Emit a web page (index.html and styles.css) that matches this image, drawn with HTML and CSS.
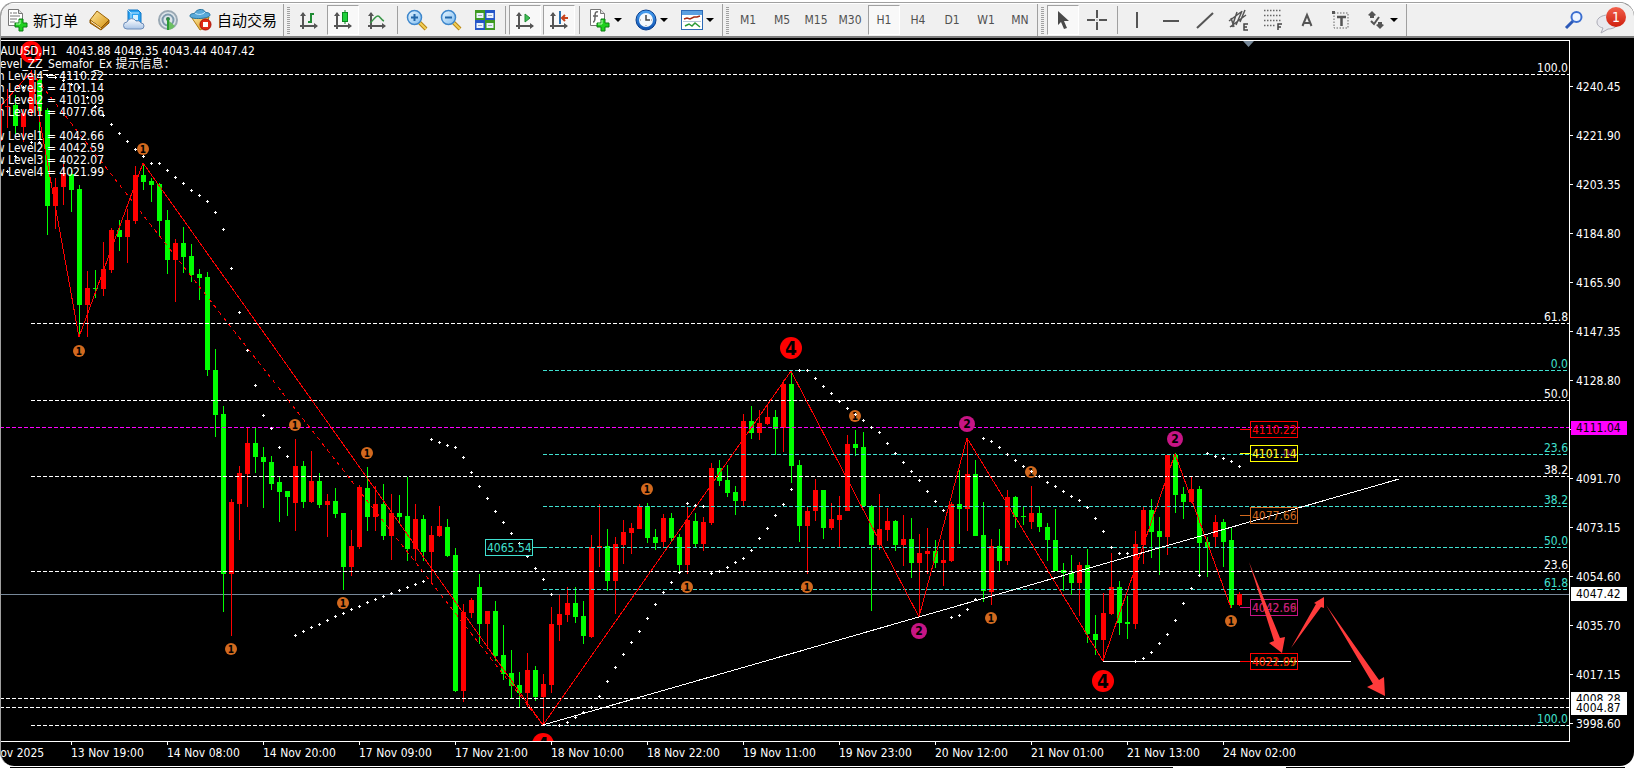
FILE: index.html
```html
<!DOCTYPE html>
<html lang="zh-CN">
<head>
<meta charset="utf-8">
<title>XAUUSD,H1</title>
<link rel="stylesheet" href="styles.css">
</head>
<body>
<svg class="defs" width="0" height="0" aria-hidden="true">
  <defs>
    <linearGradient id="gold" x1="0" y1="0" x2="1" y2="1"><stop offset="0" stop-color="#ffe9a0"/><stop offset="1" stop-color="#d6920f"/></linearGradient>
    <linearGradient id="glass" x1="0" y1="0" x2="1" y2="1"><stop offset="0" stop-color="#e8f6ff"/><stop offset="1" stop-color="#7fbcf0"/></linearGradient>
    <linearGradient id="cloud" x1="0" y1="0" x2="0" y2="1"><stop offset="0" stop-color="#ffffff"/><stop offset="1" stop-color="#a9c4e6"/></linearGradient>
    <linearGradient id="ring" x1="0" y1="0" x2="0" y2="1"><stop offset="0" stop-color="#4aa3f5"/><stop offset="1" stop-color="#0b4fae"/></linearGradient>
    <g id="plus"><path d="M12 11h4v4h4v4h-4v4h-4v-4h-4v-4h4z" transform="translate(0 1)" fill="#1fd01f" stroke="#0a7d12"/><path d="M13 13v4h-4" fill="none" stroke="#b7ffb0"/></g>
    <g id="axes"><path d="M4 3v16M1 16h17" stroke="#555" stroke-width="2" fill="none"/><path d="M1 6l3-4 3 4zM15 13l4 3-4 3z" fill="#555"/></g>
  </defs>
</svg>
<main class="window">
  <header class="toolbar">
    <div class="group">
      <button class="tool tool-text"><svg width="22" height="24" viewBox="0 0 22 24"><path d="M1.500 1.500h10l4 4v12h-14z" fill="#fff" stroke="#777"/><path d="M11.500 1.500v4h4" fill="#ddd" stroke="#777"/><path d="M3 5h2M6 5h4M3 8h10M3 11h7M3 14h5" stroke="#777"/><use href="#plus" x="0" y="-1"/></svg><span>新订单</span></button>
      <button class="tool" aria-label="市场报价"><svg width="22" height="22" viewBox="0 0 22 22"><path d="M8 2l12 9-8 8-11-8z" fill="url(#gold)" stroke="#9a6206"/><path d="M1 11l11 8 8-8v3l-8 7L1 14z" fill="#c27b10" stroke="#8a5604"/><path d="M2 12.500l10 7" stroke="#fff3cf"/></svg></button>
      <button class="tool" aria-label="虚拟主机"><svg width="22" height="22" viewBox="0 0 22 22"><path d="M5 1h10l3 3v11H8l-3-3z" fill="#29a3f2" stroke="#0f75c4"/><path d="M8 4h8M8 4v8M8 4L5 1" stroke="#bfe6ff" fill="none"/><path d="M10 6h5v5h-5z" fill="#d8f1ff"/><path d="M4 20a3.500 3.500 0 0 1 0-7 5 5 0 0 1 9-1 4 4 0 0 1 5 2 3 3 0 0 1 0 6z" fill="url(#cloud)" stroke="#6c8cb8"/></svg></button>
      <button class="tool" aria-label="信号"><svg width="22" height="22" viewBox="0 0 22 22"><circle cx="11" cy="11" r="9" fill="#dde5ea" stroke="#9aa9b4" stroke-width="2"/><circle cx="11" cy="11" r="5.500" fill="none" stroke="#7c98ac" stroke-width="2"/><path d="M11 11v10a10 10 0 0 0 7-4z" fill="#6cbf63"/><circle cx="11" cy="10" r="2" fill="#2f7d4c"/><path d="M11 10v11" stroke="#2d9a35" stroke-width="2"/></svg></button>
      <button class="tool tool-auto"><svg width="24" height="24" viewBox="0 0 24 24"><path d="M3 10l17-1-3 10-6 3z" fill="url(#gold)" stroke="#b07a12"/><path d="M1 8c0-3 4-2 5-3 1-4 9-5 10-1 1 1 5 0 5 3 0 4-20 5-20 1z" fill="#58a9d8" stroke="#27759f"/><path d="M6 5c2 2 8 2 10-1" stroke="#c8ecff" fill="none"/><circle cx="16.500" cy="16.500" r="5.500" fill="#e02a16" stroke="#a81205"/><rect x="14" y="14" width="5" height="5" fill="#fff"/></svg><span>自动交易</span></button>
    </div>
    <div class="group">
      <i class="grip"></i>
      <button class="tool" aria-label="柱状图"><svg width="20" height="20" viewBox="0 0 20 20"><use href="#axes"/><path d="M12 3v10M12 4h3M9 12h3" stroke="#1f8b33" stroke-width="2"/></svg></button>
      <button class="tool active" aria-label="蜡烛图"><svg width="20" height="20" viewBox="0 0 20 20"><use href="#axes"/><path d="M12 0v14" stroke="#0a8a20"/><rect x="9.500" y="2.500" width="5" height="9" fill="#1fd03a" stroke="#0a8a20"/></svg></button>
      <button class="tool" aria-label="折线图"><svg width="20" height="20" viewBox="0 0 20 20"><use href="#axes"/><path d="M3 13c3-2 5-7 8-7 2 0 3 4 6 5" stroke="#3a9648" stroke-width="1.500" fill="none"/></svg></button>
      <i class="sep"></i>
      <button class="tool" aria-label="放大"><svg width="22" height="22" viewBox="0 0 22 22"><path d="M13 13l7 7" stroke="#b88514" stroke-width="4"/><path d="M13 13l7 7" stroke="#f2cf57" stroke-width="2"/><circle cx="8.500" cy="8.500" r="7" fill="url(#glass)" stroke="#3e87cc" stroke-width="1.500"/><path d="M5 8.500h7M8.500 5v7" stroke="#2266a8" stroke-width="2"/></svg></button>
      <button class="tool" aria-label="缩小"><svg width="22" height="22" viewBox="0 0 22 22"><path d="M13 13l7 7" stroke="#b88514" stroke-width="4"/><path d="M13 13l7 7" stroke="#f2cf57" stroke-width="2"/><circle cx="8.500" cy="8.500" r="7" fill="url(#glass)" stroke="#3e87cc" stroke-width="1.500"/><path d="M5 8.500h7" stroke="#2266a8" stroke-width="2"/></svg></button>
      <button class="tool" aria-label="平铺窗口"><svg width="22" height="22" viewBox="0 0 22 22"><path d="M1 1h10v10H1zM11 11h10v10H11z" fill="#3f9a23"/><path d="M11 1h10v10H11zM1 11h10v10H1z" fill="#2456c8"/><path d="M2.500 4h7v5h-7zM12.500 4h7v5h-7zM2.500 14h7v5h-7zM12.500 14h7v5h-7z" fill="#eaf4ff"/><path d="M4 6.500h4M14 6.500h4M4 16.500h4M14 16.500h4" stroke="#9ab"/></svg></button>
      <i class="sep"></i>
      <button class="tool active" aria-label="自动滚动"><svg width="20" height="20" viewBox="0 0 20 20"><use href="#axes"/><path d="M10 4l5 4-5 4z" fill="#3fbf55" stroke="#1f8b33"/></svg></button>
      <button class="tool active" aria-label="图表平移"><svg width="20" height="20" viewBox="0 0 20 20"><use href="#axes"/><path d="M11 1v13" stroke="#2a6fae" stroke-width="2"/><path d="M13 8h6M16 5l-3 3 3 3" stroke="#c8421a" stroke-width="2" fill="none"/></svg></button>
      <i class="sep"></i>
      <button class="tool menu" aria-label="技术指标"><svg width="22" height="24" viewBox="0 0 22 24"><path d="M1.500 1.500h10l4 4v12h-14z" fill="#fff" stroke="#777"/><path d="M11.500 1.500v4h4" fill="#ddd" stroke="#777"/><path d="M9 4c-3-1-3 2-3 5s0 5-2 5M4 8h5" stroke="#666" fill="none" stroke-width="1.500"/><use href="#plus" x="0" y="-1"/></svg><i class="caret"></i></button>
      <button class="tool menu" aria-label="时间周期"><svg width="22" height="22" viewBox="0 0 22 22"><circle cx="11" cy="11" r="10" fill="url(#ring)" stroke="#0a3f8f"/><circle cx="11" cy="11" r="7" fill="#f4f8fc"/><path d="M11 6v5h4" stroke="#444" stroke-width="1.500" fill="none"/><path d="M5 11h1M16 11h1M11 16v1" stroke="#888"/></svg><i class="caret"></i></button>
      <button class="tool menu" aria-label="模板"><svg width="22" height="20" viewBox="0 0 22 20"><rect x=".5" y=".5" width="21" height="19" fill="#fff" stroke="#2c69b5"/><rect x="1" y="1" width="20" height="4" fill="#5b9fe0"/><path d="M3 9l3-1 3 1 4-2 3 0 3-1" stroke="#a62a12" stroke-width="1.500" fill="none"/><path d="M2 11.500h18" stroke="#b7c8da"/><path d="M4 16l4-2 3 2 3-3 5 4" stroke="#2a9a37" stroke-width="1.500" fill="none"/></svg><i class="caret"></i></button>
    </div>
    <div class="group timeframes">
      <i class="grip"></i>
      <button class="tool">M1</button>
      <button class="tool">M5</button>
      <button class="tool">M15</button>
      <button class="tool">M30</button>
      <button class="tool active">H1</button>
      <button class="tool">H4</button>
      <button class="tool">D1</button>
      <button class="tool">W1</button>
      <button class="tool">MN</button>
    </div>
    <div class="group">
      <i class="grip"></i>
      <button class="tool active" aria-label="光标"><svg width="20" height="20" viewBox="0 0 20 20"><path d="M5 1v14l3-3 3 7 3-1-3-7h5z" fill="#4a4a4a"/></svg></button>
      <button class="tool" aria-label="十字准线"><svg width="20" height="20" viewBox="0 0 20 20"><path d="M10 0v8M10 12v8M0 10h8M12 10h8" stroke="#555" stroke-width="2"/><path d="M9.500 10h1" stroke="#555"/></svg></button>
      <i class="sep"></i>
      <button class="tool" aria-label="垂直线"><svg width="20" height="20" viewBox="0 0 20 20"><path d="M10 2v16" stroke="#555" stroke-width="2"/></svg></button>
      <button class="tool" aria-label="水平线"><svg width="20" height="20" viewBox="0 0 20 20"><path d="M2 11h16" stroke="#555" stroke-width="2"/></svg></button>
      <button class="tool" aria-label="趋势线"><svg width="20" height="20" viewBox="0 0 20 20"><path d="M2 18L18 3" stroke="#555" stroke-width="2"/></svg></button>
      <button class="tool" aria-label="等距通道"><svg width="22" height="22" viewBox="0 0 22 22"><path d="M1 12L13 3M2 18L18 6M4 18L9 3M8 16l6-14M12 13l5-12M3 9l3 9" stroke="#555" stroke-width="1.500"/><path d="M20 15h-4v6h4M16 18h3" stroke="#444" stroke-width="1.500" fill="none"/></svg></button>
      <button class="tool" aria-label="斐波纳契回调"><svg width="22" height="22" viewBox="0 0 22 22"><path d="M2 1.500h17M2 6.500h17M2 11.500h17M2 16.500h11" stroke="#666" stroke-width="1.500" stroke-dasharray="1.500 1.500"/><path d="M20 15h-4v6M16 18h3" stroke="#444" stroke-width="1.500" fill="none"/></svg></button>
      <button class="tool" aria-label="文字"><svg width="20" height="20" viewBox="0 0 20 20"><path d="M5.500 16L10 5l4.500 11M7 13h6" stroke="#555" stroke-width="2" fill="none"/></svg></button>
      <button class="tool" aria-label="文字标签"><svg width="20" height="20" viewBox="0 0 20 20"><rect x="3" y="3" width="14" height="15" fill="none" stroke="#666" stroke-dasharray="1.500 1.500"/><path d="M6 7h9M10.500 7v9" stroke="#555" stroke-width="2.500"/><path d="M1 1h3v3H1z" fill="#555"/></svg></button>
      <button class="tool menu" aria-label="箭头"><svg width="22" height="20" viewBox="0 0 22 20"><path d="M7 1l4 4-2 1v2H5V6L3 5zM15 19l-4-4 2-1v-2h4v2l2 1z" fill="#555"/><path d="M6 11l3 3 5-7" stroke="#555" stroke-width="2" fill="none"/></svg><i class="caret"></i></button>
    </div>
    <div class="group tail">
      <button class="tool" aria-label="搜索"><svg width="20" height="20" viewBox="0 0 20 20"><path d="M9 11l-7 7" stroke="#2c59b8" stroke-width="3"/><circle cx="12.500" cy="7" r="5" fill="#eef5ff" stroke="#3c6fd0" stroke-width="2"/></svg></button>
      <button class="tool chat" aria-label="消息"><svg width="30" height="28" viewBox="0 0 30 28"><path d="M12 9c6 0 10 3 10 7s-4 7-10 7l-7 4 2-5c-4-1-6-3-6-6 0-4 5-7 11-7z" fill="#e8e8ee" stroke="#aaaab4"/></svg><span class="badge">1</span></button>
    </div>
  </header>
  <section class="chart">
    <svg class="plot-area" id="plot" role="img" aria-label="XAUUSD H1"></svg>
    <div class="price-axis">
      <ol class="prices">
        <li>4240.45</li><li>4221.90</li><li>4203.35</li><li>4184.80</li><li>4165.90</li><li>4147.35</li><li>4128.80</li><li></li><li>4091.70</li><li>4073.15</li><li>4054.60</li><li>4035.70</li><li>4017.15</li><li>3998.60</li>
      </ol>
      <span class="tag tag-alert">4111.04</span>
      <span class="tag tag-last">4047.42</span>
      <span class="tag tag-upper">4008.28</span>
      <span class="tag tag-lower">4004.87</span>
    </div>
    <ol class="time-axis">
      <li>12 Nov 2025</li><li>13 Nov 19:00</li><li>14 Nov 08:00</li><li>14 Nov 20:00</li><li>17 Nov 09:00</li><li>17 Nov 21:00</li><li>18 Nov 10:00</li><li>18 Nov 22:00</li><li>19 Nov 11:00</li><li>19 Nov 23:00</li><li>20 Nov 12:00</li><li>21 Nov 01:00</li><li>21 Nov 13:00</li><li>24 Nov 02:00</li>
    </ol>
  </section>
</main>
<div class="underline"><i class="part-a"></i><i class="part-b"></i></div>
<script src="script.js"></script>
</body>
</html>
```
FILE: styles.css
```css
* { box-sizing: border-box; }
body {
  margin: 0;
  padding-top: 2px;
  background: #fff;
  font-family: "DejaVu Sans Condensed", "Noto Sans", "Noto Sans CJK SC", sans-serif;
  font-size: 12px;
  line-height: 14px;
  overflow: hidden;
}
ol { margin: 0; padding: 0; list-style: none; }
.defs { position: absolute; }
.window {
  display: flex;
  flex-direction: column;
  min-height: calc(100vh - 5px);
  margin-right: 1px;
  background: #000;
  border-top: 1px solid #a0a0a0;
  border-left: 1px solid #a0a0a0;
  border-radius: 14px;
  overflow: hidden;
}

/* toolbar */
.toolbar {
  display: flex;
  flex: none;
  height: 35px;
  background: #f0f0f0;
  border-top: 1px solid #fff;
  border-bottom: 2px solid #808080;
}
.group {
  display: flex;
  align-items: center;
  padding: 0 2px;
  border-right: 1px solid #a0a0a0;
}
.timeframes { padding-right: 0; }
.tool {
  display: flex;
  flex: none;
  align-items: center;
  justify-content: center;
  width: 32px;
  height: 30px;
  margin: 0 1px;
  padding: 0;
  border: 1px solid transparent;
  background: none;
  color: #505050;
  font: inherit;
}
.tool svg { flex: none; }
.tool.active {
  border-color: #a0a0a0 #fff #fff #a0a0a0;
  background: #f8f8f8;
}
.tool-text, .tool-auto {
  gap: 4px;
  color: #000;
  font-family: "Noto Sans CJK SC", sans-serif;
  font-size: 15px;
  line-height: 20px;
}
.tool-text { width: 78px; justify-content: flex-start; padding-left: 2px; }
.tool-auto { width: 94px; }
.menu { width: 44px; gap: 3px; }
.caret {
  border: 4px solid transparent;
  border-top-color: #000;
  border-bottom-width: 0;
}
.sep { width: 1px; height: 28px; margin: 0 2px 0 3px; background: #a0a0a0; }
.grip {
  width: 3px;
  height: 27px;
  margin: 0 2px 0 1px;
  background: repeating-linear-gradient(#a0a0a0 0 1px, #f0f0f0 1px 2px);
}
.tail { flex: 1; justify-content: flex-end; border-right: 0; padding-right: 6px; }
.chat { position: relative; margin-left: 4px; }
.badge {
  position: absolute;
  top: 1px;
  right: 0;
  width: 20px;
  height: 20px;
  border-radius: 50%;
  background: linear-gradient(#f2604c, #cf1f0d);
  color: #fff;
  font-size: 14px;
  line-height: 20px;
}

/* chart */
.chart {
  display: grid;
  flex: 1;
  grid-template-columns: 1fr 64px;
  grid-template-rows: 1fr 24px;
  margin-top: 2px;
  color: #fff;
}
.plot-area {
  width: 100%;
  height: 100%;
  border: solid #fff;
  border-width: 1px 1px 1px 0;
  overflow: hidden;
}
.plot-area text { font-size: 12px; }
.plot-area .n1 { font-size: 10px; font-weight: bold; }
.plot-area .n2 { font-size: 12px; font-weight: bold; }
.plot-area .n4 { font-size: 19px; font-weight: bold; }
.price-axis { position: relative; height: 0; padding-top: 22px; }
.prices li {
  display: flex;
  align-items: center;
  height: 49px;
  padding-left: 6px;
  background: linear-gradient(#fff, #fff) 0 24px / 3px 1px no-repeat;
}
.tag {
  position: absolute;
  left: 1px;
  width: 56px;
  height: 14px;
  padding-left: 5px;
  background: #fff;
  color: #000;
}
.tag-alert { top: 381px; background: #f0f; }
.tag-last { top: 547px; }
.tag-upper { top: 652px; }
.tag-lower { top: 661px; }
.time-axis {
  display: flex;
  grid-column: 1 / -1;
  margin-left: -26px;
  overflow: hidden;
}
.time-axis li {
  flex: 0 0 96px;
  padding-top: 4px;
  background: linear-gradient(#fff, #fff) 0 0 / 1px 3px no-repeat;
  white-space: nowrap;
}
.underline {
  display: flex;
  height: 1px;
  margin-top: 1px;
  padding: 0 10px;
  justify-content: space-between;
}
.part-a { flex: 0 0 72%; background: #000; }
.part-b { flex: 0 0 21%; background: #000; }
```
FILE: script.js
```js
const plot = document.getElementById("plot");
const NS = "http://www.w3.org/2000/svg";
const UP = "#ff0000", DOWN = "#00ff00", AQUA = "#40e0d0", ORANGE = "#d2691e", VIOLET = "#c71585";

function add(parent, name, attrs, text) {
  const el = document.createElementNS(NS, name);
  for (const key in attrs) el.setAttribute(key, attrs[key]);
  if (text !== undefined) el.textContent = text;
  parent.appendChild(el);
  return el;
}

const canvas = add(plot, "g", { transform: "translate(-1 -41)" });
const scale = add(plot, "g", { transform: "translate(0 -41)" });

/* Horizontal levels: y, colour, start x, label */
const levels = [
  [370, AQUA, 543, "0.0"], [454, AQUA, 543, "23.6"], [506, AQUA, 543, "38.2"],
  [547, AQUA, 543, "50.0"], [589, AQUA, 543, "61.8"], [725, AQUA, 546, "100.0"],
  [74, "#fff", 31, "100.0"], [323, "#fff", 31, "61.8"], [400, "#fff", 31, "50.0"],
  [476, "#fff", 31, "38.2"], [571, "#fff", 31, "23.6"], [725, "#fff", 31, ""],
  [698, "#fff", 0, ""], [707, "#fff", 0, ""], [427, "#ff00ff", 0, ""]
];
add(canvas, "line", { x1: 0, x2: "110%", y1: 594.5, y2: 594.5, stroke: "#778899" });

/* Candles, 8px apart from x = -1: colour, high, low, body top, body bottom */
const candles = `r105,141,105,141 r89,128,106,107 g95,134,105,126 r109,142,113,127 r70,116,76,113 g79,139,80,111
g108,235,110,206 r178,229,187,206 r164,205,174,187 g170,212,174,190 g185,337,189,305 r271,337,288,305
g270,298,288,289 r242,296,269,289 r228,273,230,270 g220,251,230,237 r209,263,220,237 r166,224,175,221
g164,190,175,182 g178,202,181,185 g183,236,184,221 g210,274,220,260 r239,302,243,260 g227,273,243,257
g244,282,256,275 g269,300,274,278 g272,376,277,370 g349,437,370,415 g406,612,414,574 r499,636,502,574
r466,540,473,504 r427,507,443,474 g428,473,443,457 g447,508,457,462 g456,490,462,484 g477,522,482,492
g491,516,491,497 r439,531,466,503 g461,508,466,502 r451,503,481,502 g473,508,481,505 r494,537,501,505
g488,518,501,514 g513,590,513,567 r530,576,546,567 r485,549,487,547 g467,531,488,517 r486,531,504,517
g484,540,504,536 r494,560,513,536 g495,524,513,517 g477,561,516,549 r504,561,519,549 g515,561,519,552
r526,583,535,552 r506,537,526,536 g519,557,527,556 g548,692,555,691 r604,702,612,691 r598,618,600,613
g574,644,587,624 r611,649,611,624 g601,661,611,656 g625,680,655,674 g650,698,673,686 g672,708,685,693
r653,707,670,693 g666,701,670,697 r674,725,684,697 r607,693,624,685 r595,641,614,625 r587,622,603,615
g587,623,603,617 g601,644,616,636 r535,638,547,637 r504,567,546,548 g529,591,546,581 r537,614,544,581
r520,564,532,545 r523,554,528,533 r504,529,506,529 g503,543,506,538 g529,550,537,543 r514,547,518,542
g513,542,518,538 g534,573,537,565 r507,574,520,565 g513,548,521,544 r517,551,522,544 r463,525,468,523
g460,486,468,481 g465,497,480,493 g486,515,492,501 r414,506,421,501 g406,439,421,433 r410,440,423,433
r405,425,417,424 g410,455,417,429 r380,452,384,428 g371,483,384,466 g460,542,465,526 r506,574,511,526
r479,521,490,511 g490,539,490,528 r503,530,519,528 r496,547,515,520 r435,511,444,511 g430,456,444,448
g432,507,447,506 g505,611,506,545 r494,550,529,545 r508,541,521,530 g520,551,521,545 r515,566,539,545
g518,578,539,563 r534,617,553,563 r528,574,551,554 g540,568,551,563 r540,586,560,563 r502,562,504,561
g470,544,504,509 r439,531,474,509 g460,536,474,536 g502,602,535,591 r539,605,546,592 g529,571,546,561
r490,565,497,561 g496,528,497,517 g507,525,516,517 r486,529,513,522 g506,532,513,527 g523,561,527,540
g509,571,540,571 g563,591,570,573 g555,595,573,583 r562,616,565,583 g549,643,565,634 g615,655,634,640
r593,661,613,640 r553,615,587,614 g581,635,587,623 g596,639,622,624 r531,629,544,624 r507,564,510,545
g499,558,510,532 g517,575,531,537 r455,555,455,537 g453,513,455,495 g487,519,494,502 r477,503,489,502
g486,575,489,543 g537,577,542,547 r515,547,522,537 g519,567,522,542 g528,608,540,605 r592,606,594,605`.split(/\s+/);

candles.forEach((item, i) => {
  const x = -1 + 8 * i;
  const fill = item[0] === "r" ? UP : DOWN;
  const [high, low, top, bottom] = item.slice(1).split(",").map(Number);
  add(canvas, "rect", { x, y: high, width: 1, height: low - high, fill });
  add(canvas, "rect", { x: x - 2, y: top, width: 5, height: bottom - top, fill });
});

levels.forEach(([y, stroke, x1, label]) => {
  add(canvas, "line", { x1, x2: "110%", y1: y + 0.5, y2: y + 0.5, stroke, "stroke-dasharray": "4 2", "shape-rendering": "crispEdges" });
  if (label) add(scale, "text", { x: "100%", dx: -1, y: y - 2, fill: stroke, "text-anchor": "end" }, label);
});

/* Zigzag and trend lines */
const lines = add(canvas, "g", { "shape-rendering": "crispEdges", fill: "none" });
add(lines, "polyline", { points: "-1,108 31,72 79,337 143,163 543,725 791,371 919,617 967,438 1103,661 1175,454 1231,608", stroke: UP });
add(lines, "line", { x1: 31, y1: 72, x2: 543, y2: 725, stroke: UP, "stroke-dasharray": "4 4" });
add(lines, "line", { x1: 543, y1: 725, x2: 1399, y2: 479, stroke: "#fff" });
add(lines, "line", { x1: 1103, y1: 661.5, x2: 1351, y2: 661.5, stroke: "#fff" });

/* Parabolic dots: first x, then one y per bar */
const dots = [
  [7, 171, 156, 87, 142, 142, 75, 77, 80, 84, 87, 97, 106, 115, 124, 133, 141, 149, 156, 163, 163, 170, 177, 183, 190, 195, 201, 212, 229, 268, 312, 350, 385, 415, 428, 447, 456],
  [295, 635, 631, 627, 624, 620, 616, 613, 609, 606, 602, 599, 596, 593, 590, 587, 584, 581, 439, 442, 445, 447, 457, 472, 486, 498, 511, 522, 533, 543, 556, 568, 579, 594],
  [559, 725, 722, 717, 712, 707, 696, 681, 667, 654, 642, 631, 618, 604, 592, 582, 572, 503, 505, 506, 573, 571, 567, 562, 558, 550, 538, 528, 515, 504, 489],
  [799, 370, 370, 378, 386, 393, 401, 408, 414, 420, 427, 432, 443, 453, 462, 471, 480, 491, 501, 510, 617, 615, 609, 599],
  [983, 438, 441, 447, 454, 460, 466, 471, 476, 482, 486, 491, 496, 500, 507, 518, 531, 547, 553, 553, 661, 658, 652, 643, 634, 620, 603, 588, 575, 453, 456, 458, 461, 466]
];
let dotPath = "";
dots.forEach(([x, ...ys]) => ys.forEach((y, i) => {
  const cx = x + 8 * i;
  dotPath += `M${cx - 1} ${y}h3v1h-3zM${cx} ${y - 1}h1v3h-1z`;
}));

/* Semaphores */
const marks = [
  [1, 143, 149], [1, 79, 351], [1, 295, 425], [1, 367, 453], [1, 231, 649], [1, 343, 603], [1, 647, 489],
  [1, 687, 587], [1, 807, 587], [1, 855, 416], [1, 1031, 472], [1, 991, 618], [1, 1231, 621],
  [2, 919, 631], [2, 967, 424], [2, 1175, 439],
  [4, 31, 52], [4, 791, 348], [4, 1103, 681], [4, 543, 744]
];
const looks = { 1: [6, ORANGE, 4], 2: [8, VIOLET, 4], 4: [11, UP, 7] };
marks.forEach(([n, cx, cy]) => {
  const [r, fill, drop] = looks[n];
  add(canvas, "circle", { cx, cy, r, fill });
  add(canvas, "text", { x: cx, y: cy + drop, class: "n" + n, "text-anchor": "middle", fill: "#000" }, n);
});
add(canvas, "path", { d: dotPath, fill: "#fff", "shape-rendering": "crispEdges" });

/* Boxed price labels: x, y of the level, tick from, tick to, colour, text, colour and text of the label beneath */
[
  [1250, 429, 1240, 1250, UP, "4110.22"],
  [1250, 453, 1240, 1250, "#ffff00", "4101.14", VIOLET, "4101.09"],
  [1250, 515, 1240, 1250, ORANGE, "4077.66"],
  [1250, 607, 1240, 1250, VIOLET, "4042.66", ORANGE, "4042.59"],
  [1250, 661, 1240, 1250, UP, "4022.07", "#ffff00", "4021.99"],
  [485, 547, 533, 543, AQUA, "4065.54"]
].forEach(([x, y, x1, x2, color, text, under, underText]) => {
  add(canvas, "rect", { x: x + 0.5, y: y - 7.5, width: 47, height: 16, fill: "none", stroke: color });
  add(canvas, "line", { x1, x2, y1: y + 0.5, y2: y + 0.5, stroke: color });
  if (under) add(canvas, "text", { x: x + 2, y: y + 5, fill: under, opacity: 0.6 }, underText);
  add(canvas, "text", { x: x + 2, y: y + 5, fill: color }, text);
});

/* Forecast arrows */
[
  "1249,562 1280,638 1285,637 1282,653 1269,643 1274,641",
  "1291,648 1316,604 1314,603 1324,597 1324,608 1321,607",
  "1326,605 1379,680 1384,677 1385,696 1367,687 1373,684"
].forEach(points => add(canvas, "polygon", { points, fill: "#ff3b3b" }));

add(canvas, "polygon", { points: "1243,41 1254,41 1248.5,47", fill: "#778899" });

/* Indicator comments */
const note = (x, y, text, anchor = "start") => add(canvas, "text", { x, y, fill: "#fff", "text-anchor": anchor }, text);
note(57, 55, "XAUUSD,H1", "end");
note(66, 55, "4043.88 4048.35 4043.44 4047.42");
note(-6, 68, "Level_ZZ_Semafor_Ex 提示信息：");
["High Level4 = 4110.22", "High Level3 = 4101.14", "High Level2 = 4101.09", "High Level1 = 4077.66", "",
  "Low Level1 = 4042.66", "Low Level2 = 4042.59", "Low Level3 = 4022.07", "Low Level4 = 4021.99"
].forEach((text, i) => note(104, 80 + 12 * i, text, "end"));
```
